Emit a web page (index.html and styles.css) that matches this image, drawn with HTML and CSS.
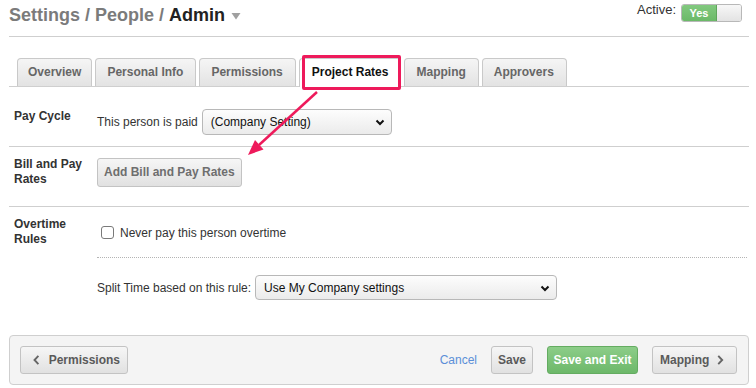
FILE: index.html
```html
<!DOCTYPE html>
<html lang="en">
<head>
    <meta charset="UTF-8">
    <meta name="viewport" content="width=device-width, initial-scale=1.0">
    <title>Admin - Project Rates</title>
    <link rel="stylesheet" href="styles.css">
</head>
<body>
    <div class="page">
        <header class="topbar">
            <h1 class="crumbs">
                <span class="crumbMuted">Settings / People / </span>Admin
                <svg class="caret" width="10" height="8" viewBox="0 0 10 8"><path d="M0.5 1 L9.5 1 L5 7.5 Z" fill="#a0a0a0"/></svg>
            </h1>
            <div class="activeBox">
                <span>Active:</span>
                <span class="toggle">
                    <span class="toggleOn">Yes</span>
                    <span class="toggleOff"></span>
                </span>
            </div>
        </header>

        <nav class="tabs">
            <a class="tab">Overview</a>
            <a class="tab">Personal Info</a>
            <a class="tab">Permissions</a>
            <a class="tab tabActive">Project Rates</a>
            <a class="tab">Mapping</a>
            <a class="tab">Approvers</a>
        </nav>

        <section class="row rowPay">
            <div class="rowLabel">Pay Cycle</div>
            <div class="rowBody">
                <span class="fieldText">This person is paid</span>
                <span class="selectWrap selectPay">
                    <select class="select"><option>(Company Setting)</option></select>
                    <svg class="selectArrow" width="10" height="7" viewBox="0 0 10 7"><polyline points="1.5,1.5 5,5 8.5,1.5" fill="none" stroke="#111" stroke-width="2"/></svg>
                </span>
            </div>
        </section>

        <section class="row rowRates">
            <div class="rowLabel">Bill and Pay<br>Rates</div>
            <div class="rowBody">
                <button class="btn btnAdd">Add Bill and Pay Rates</button>
            </div>
        </section>

        <section class="row rowOvertime">
            <div class="rowLabel">Overtime<br>Rules</div>
            <div class="rowStack">
                <label class="checkLine">
                    <input type="checkbox" class="check">
                    <span>Never pay this person overtime</span>
                </label>
                <div class="splitLine">
                    <span class="fieldText">Split Time based on this rule:</span>
                    <span class="selectWrap selectSplit">
                        <select class="select"><option>Use My Company settings</option></select>
                        <svg class="selectArrow" width="10" height="7" viewBox="0 0 10 7"><polyline points="1.5,1.5 5,5 8.5,1.5" fill="none" stroke="#111" stroke-width="2"/></svg>
                    </span>
                </div>
            </div>
        </section>

        <footer class="actions">
            <button class="btn btnNav btnPrev">
                <svg width="8" height="12" viewBox="0 0 8 12"><polyline points="6.5,1 1.8,6 6.5,11" fill="none" stroke="#666" stroke-width="2.3"/></svg>
                Permissions
            </button>
            <div class="actionsRight">
                <a class="cancelLink">Cancel</a>
                <button class="btn btnSave">Save</button>
                <button class="btn btnGreen">Save and Exit</button>
                <button class="btn btnNav btnNext">
                    Mapping
                    <svg width="8" height="12" viewBox="0 0 8 12"><polyline points="1.5,1 6.2,6 1.5,11" fill="none" stroke="#666" stroke-width="2.3"/></svg>
                </button>
            </div>
        </footer>
    </div>

    <svg class="calloutArrow" width="756" height="388" viewBox="0 0 756 388">
        <line x1="317" y1="92" x2="259" y2="145" stroke="#ee1a5b" stroke-width="2.5"/>
        <polygon points="248,155 263.5,149.5 255,140" fill="#ee1a5b"/>
    </svg>
</body>
</html>
```

FILE: styles.css
```css
* {
    font-family: "Liberation Sans", Arial, sans-serif;
    box-sizing: border-box;
}

body {
    margin: 0;
    background-color: #ffffff;
    color: #333;
    position: relative;
    width: 756px;
    height: 388px;
    overflow: hidden;
}

.page {
    margin: 0 7px 0 9px;
}

/* header */

.topbar {
    display: flex;
    justify-content: space-between;
    align-items: flex-start;
    height: 37px;
    border-bottom: 1px solid #cfcfcf;
}

.crumbs {
    margin: 0;
    padding-top: 4px;
    font-size: 18px;
    line-height: 22px;
    font-weight: bold;
    color: #222;
    display: flex;
    align-items: center;
}

.crumbMuted {
    color: #7b7b7b;
    white-space: pre;
}

.caret {
    margin-left: 6px;
    margin-top: 1px;
}

.activeBox {
    display: flex;
    align-items: flex-start;
    gap: 5px;
    font-size: 13px;
    line-height: 18px;
    color: #333;
    margin-right: 7px;
    padding-top: 1px;
}

.toggle {
    display: flex;
    margin-top: 3px;
    height: 18px;
    width: 61px;
    border: 1px solid #b8b8b8;
    border-radius: 3px;
    overflow: hidden;
}

.toggleOn {
    width: 35px;
    background: linear-gradient(#82c97f, #6bb968);
    border-right: 1px solid #5fa55c;
    color: #fff;
    font-size: 11px;
    font-weight: bold;
    text-align: center;
    line-height: 16px;
}

.toggleOff {
    flex: 1;
    background: linear-gradient(#f7f7f7, #e3e3e3);
}

/* tabs */

.tabs {
    display: flex;
    gap: 3px;
    margin-top: 21px;
    padding-left: 8px;
    border-bottom: 1px solid #cfcfcf;
}

.tab {
    display: block;
    height: 28px;
    line-height: 27px;
    padding: 0 12px 0 11px;
    border: 1px solid #c9c9c9;
    border-bottom: none;
    border-radius: 4px 4px 0 0;
    background: linear-gradient(#f5f5f5, #e3e3e3);
    color: #666;
    font-size: 12px;
    font-weight: bold;
    white-space: nowrap;
}

.tab:first-child {
    padding: 0 10px;
}

.tabActive {
    position: relative;
    height: 29px;
    margin-bottom: -1px;
    padding: 0 12px;
    background: #fff;
    color: #111;
}

.tabActive::after {
    content: "";
    position: absolute;
    top: -4px;
    bottom: -3px;
    left: 2px;
    right: -1px;
    border: 3px solid #ee1a5b;
    border-radius: 2px;
}

/* rows */

.row {
    display: flex;
    border-bottom: 1px solid #cfcfcf;
}

.rowLabel {
    width: 88px;
    padding-left: 5px;
    font-size: 12px;
    line-height: 15px;
    font-weight: bold;
    color: #333;
    flex-shrink: 0;
}

.rowBody {
    display: flex;
    align-items: center;
    gap: 4px;
}

.fieldText {
    font-size: 12px;
    color: #333;
}

.rowPay {
    padding: 20px 0 11px;
}

.rowPay .rowLabel {
    padding-top: 2px;
}

.rowPay .rowBody {
    margin-top: 2px;
}

.rowRates {
    align-items: center;
    padding: 10px 0 19px;
}

.rowOvertime {
    border-bottom: none;
}

.rowOvertime .rowLabel {
    padding-top: 10px;
}

.rowStack {
    flex: 1;
    margin-right: 2px;
}

.checkLine {
    display: flex;
    align-items: center;
    gap: 6px;
    height: 51px;
    padding: 1px 0 0 4px;
    border-bottom: 1px dotted #b4b4b4;
    font-size: 12px;
    color: #333;
}

.check {
    appearance: none;
    margin: 0;
    width: 13px;
    height: 13px;
    border: 1px solid #7a7a7a;
    border-radius: 3px;
    background: #fff;
}

.splitLine {
    display: flex;
    align-items: center;
    gap: 4px;
    margin-top: 17px;
}

/* selects */

.selectWrap {
    position: relative;
    display: inline-block;
}

.select {
    appearance: none;
    display: block;
    height: 26px;
    padding: 0 24px 0 8px;
    border: 1px solid #b8b8b8;
    border-radius: 4px;
    background: linear-gradient(#fdfdfd, #ebebeb);
    font-size: 12px;
    color: #111;
}

.selectPay .select {
    width: 190px;
}

.selectSplit .select {
    width: 302px;
    height: 25px;
}

.selectArrow {
    position: absolute;
    right: 7px;
    top: 50%;
    margin-top: -3px;
}

/* buttons */

.btn {
    display: flex;
    align-items: center;
    height: 28px;
    padding: 0 6px;
    border: 1px solid #c3c3c3;
    border-radius: 3px;
    background: linear-gradient(#f6f6f6, #e1e1e1);
    color: #5a5a5a;
    font-size: 12px;
    font-weight: bold;
    white-space: nowrap;
}

.btnAdd {
    height: 29px;
    width: 145px;
    color: #6e6e6e;
}

.btnPrev {
    gap: 9px;
    padding: 0 7px 0 12px;
    width: 108px;
}

.btnNext {
    gap: 8px;
    padding: 0 12px 0 7px;
    width: 85px;
}

.btnSave {
    width: 42px;
    justify-content: center;
}

.btnGreen {
    width: 91px;
    padding: 0;
    justify-content: center;
    background: linear-gradient(#8ccd88, #6db86a);
    border-color: #64ac61;
    color: #fff;
}

/* footer */

.actions {
    display: flex;
    justify-content: space-between;
    align-items: center;
    margin-top: 35px;
    padding: 10px 11px 10px 10px;
    border: 1px solid #cfcfcf;
    border-radius: 4px;
    background-color: #f4f4f4;
}

.actionsRight {
    display: flex;
    align-items: center;
    gap: 14px;
}

.cancelLink {
    font-size: 12px;
    color: #5b8fd8;
}

.calloutArrow {
    position: absolute;
    top: 0;
    left: 0;
    pointer-events: none;
}
```
